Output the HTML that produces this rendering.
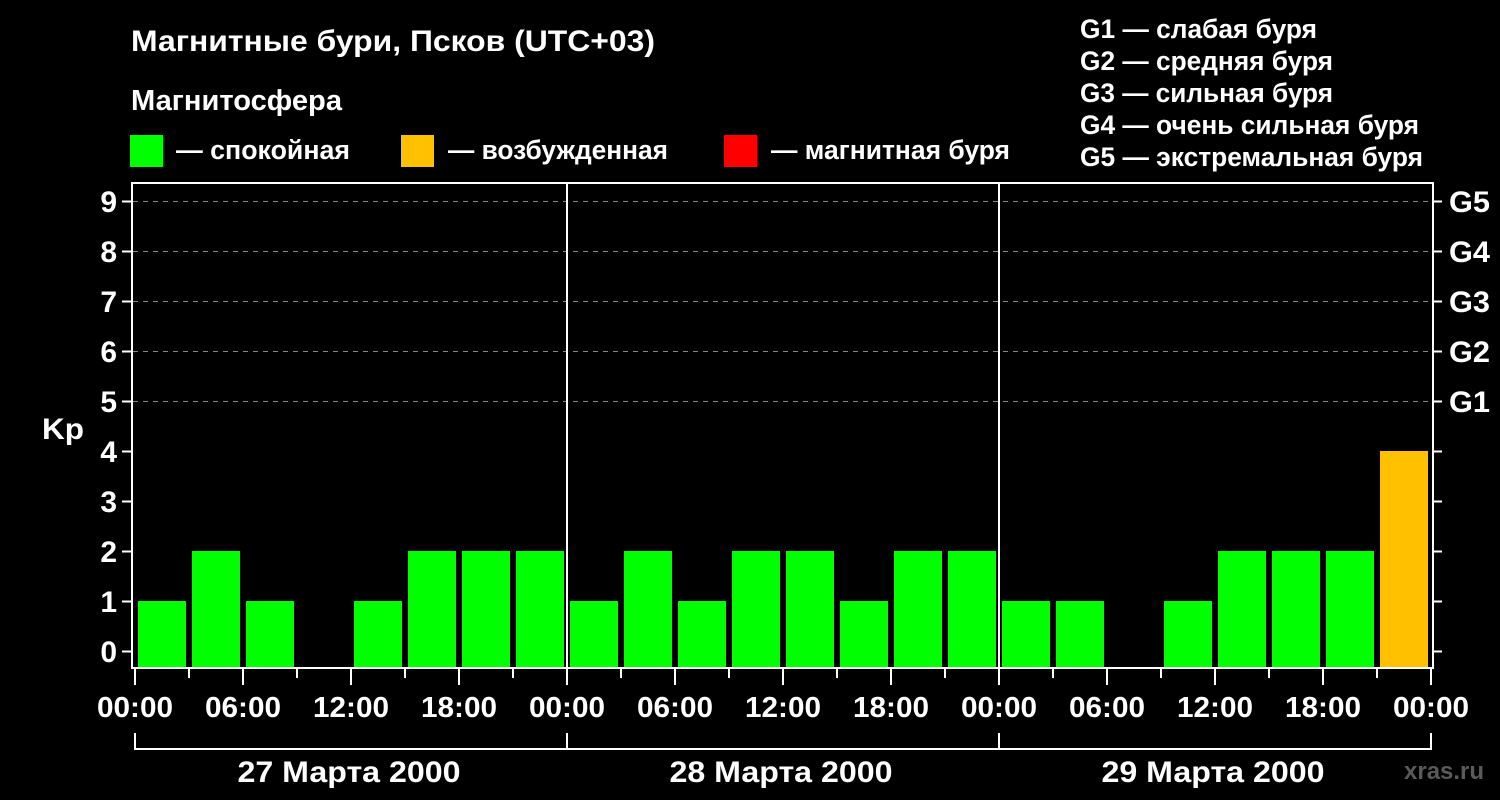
<!DOCTYPE html>
<html><head><meta charset="utf-8"><style>
html,body{margin:0;padding:0;background:#000;}
svg{display:block}
text{font-family:"Liberation Sans",Arial,sans-serif;font-weight:bold;fill:#fff}
</style></head><body>
<svg width="1500" height="800" viewBox="0 0 1500 800" xmlns="http://www.w3.org/2000/svg">
<rect width="1500" height="800" fill="#000"/>
<text x="131" y="51" font-size="30" textLength="524" lengthAdjust="spacingAndGlyphs">Магнитные бури, Псков (UTC+03)</text>
<text x="131" y="110" font-size="29" textLength="211" lengthAdjust="spacingAndGlyphs">Магнитосфера</text>
<rect x="130" y="135" width="33" height="32" fill="#00ff00"/>
<text x="176" y="159" font-size="27" textLength="174" lengthAdjust="spacingAndGlyphs">— спокойная</text>
<rect x="401" y="135" width="33" height="32" fill="#ffc000"/>
<text x="448" y="159" font-size="27" textLength="220" lengthAdjust="spacingAndGlyphs">— возбужденная</text>
<rect x="724" y="135" width="33" height="32" fill="#ff0000"/>
<text x="771" y="159" font-size="27" textLength="239" lengthAdjust="spacingAndGlyphs">— магнитная буря</text>
<g font-size="27">
<text x="1080" y="38" textLength="237" lengthAdjust="spacingAndGlyphs">G1 — слабая буря</text>
<text x="1080" y="70" textLength="253" lengthAdjust="spacingAndGlyphs">G2 — средняя буря</text>
<text x="1080" y="102" textLength="253" lengthAdjust="spacingAndGlyphs">G3 — сильная буря</text>
<text x="1080" y="134" textLength="339" lengthAdjust="spacingAndGlyphs">G4 — очень сильная буря</text>
<text x="1080" y="166" textLength="343" lengthAdjust="spacingAndGlyphs">G5 — экстремальная буря</text>
</g>
<g stroke="#888" stroke-width="1" stroke-dasharray="5,5">
<line x1="133" y1="201.5" x2="1432" y2="201.5"/>
<line x1="133" y1="251.5" x2="1432" y2="251.5"/>
<line x1="133" y1="301.5" x2="1432" y2="301.5"/>
<line x1="133" y1="351.5" x2="1432" y2="351.5"/>
<line x1="133" y1="401.5" x2="1432" y2="401.5"/>
</g>
<g fill="#00ff00">
<rect x="138" y="601" width="48" height="66"/>
<rect x="192" y="551" width="48" height="116"/>
<rect x="246" y="601" width="48" height="66"/>
<rect x="354" y="601" width="48" height="66"/>
<rect x="408" y="551" width="48" height="116"/>
<rect x="462" y="551" width="48" height="116"/>
<rect x="516" y="551" width="48" height="116"/>
<rect x="570" y="601" width="48" height="66"/>
<rect x="624" y="551" width="48" height="116"/>
<rect x="678" y="601" width="48" height="66"/>
<rect x="732" y="551" width="48" height="116"/>
<rect x="786" y="551" width="48" height="116"/>
<rect x="840" y="601" width="48" height="66"/>
<rect x="894" y="551" width="48" height="116"/>
<rect x="948" y="551" width="48" height="116"/>
<rect x="1002" y="601" width="48" height="66"/>
<rect x="1056" y="601" width="48" height="66"/>
<rect x="1164" y="601" width="48" height="66"/>
<rect x="1218" y="551" width="48" height="116"/>
<rect x="1272" y="551" width="48" height="116"/>
<rect x="1326" y="551" width="48" height="116"/>
</g>
<rect x="1380" y="451" width="48" height="216" fill="#ffc000"/>
<g stroke="#fff" stroke-width="2" fill="none">
<rect x="132" y="183" width="1301" height="485"/>
<line x1="567" y1="183" x2="567" y2="668"/>
<line x1="999" y1="183" x2="999" y2="668"/>
</g>
<g stroke="#fff" stroke-width="2">
<line x1="122" y1="201.5" x2="132" y2="201.5"/><line x1="1433" y1="201.5" x2="1442" y2="201.5"/>
<line x1="122" y1="251.5" x2="132" y2="251.5"/><line x1="1433" y1="251.5" x2="1442" y2="251.5"/>
<line x1="122" y1="301.5" x2="132" y2="301.5"/><line x1="1433" y1="301.5" x2="1442" y2="301.5"/>
<line x1="122" y1="351.5" x2="132" y2="351.5"/><line x1="1433" y1="351.5" x2="1442" y2="351.5"/>
<line x1="122" y1="401.5" x2="132" y2="401.5"/><line x1="1433" y1="401.5" x2="1442" y2="401.5"/>
<line x1="122" y1="451.5" x2="132" y2="451.5"/><line x1="1433" y1="451.5" x2="1442" y2="451.5"/>
<line x1="122" y1="501.5" x2="132" y2="501.5"/><line x1="1433" y1="501.5" x2="1442" y2="501.5"/>
<line x1="122" y1="551.5" x2="132" y2="551.5"/><line x1="1433" y1="551.5" x2="1442" y2="551.5"/>
<line x1="122" y1="601.5" x2="132" y2="601.5"/><line x1="1433" y1="601.5" x2="1442" y2="601.5"/>
<line x1="122" y1="651.5" x2="132" y2="651.5"/><line x1="1433" y1="651.5" x2="1442" y2="651.5"/>
<line x1="135" y1="669" x2="135" y2="685"/><line x1="351" y1="669" x2="351" y2="685"/>
<line x1="567" y1="669" x2="567" y2="685"/><line x1="783" y1="669" x2="783" y2="685"/>
<line x1="999" y1="669" x2="999" y2="685"/><line x1="1215" y1="669" x2="1215" y2="685"/>
<line x1="1431" y1="669" x2="1431" y2="685"/>
<line x1="243" y1="669" x2="243" y2="685"/><line x1="459" y1="669" x2="459" y2="685"/>
<line x1="675" y1="669" x2="675" y2="685"/><line x1="891" y1="669" x2="891" y2="685"/>
<line x1="1107" y1="669" x2="1107" y2="685"/><line x1="1323" y1="669" x2="1323" y2="685"/>
<line x1="189" y1="669" x2="189" y2="678"/><line x1="297" y1="669" x2="297" y2="678"/>
<line x1="405" y1="669" x2="405" y2="678"/><line x1="513" y1="669" x2="513" y2="678"/>
<line x1="621" y1="669" x2="621" y2="678"/><line x1="729" y1="669" x2="729" y2="678"/>
<line x1="837" y1="669" x2="837" y2="678"/><line x1="945" y1="669" x2="945" y2="678"/>
<line x1="1053" y1="669" x2="1053" y2="678"/><line x1="1161" y1="669" x2="1161" y2="678"/>
<line x1="1269" y1="669" x2="1269" y2="678"/><line x1="1377" y1="669" x2="1377" y2="678"/>
</g>
<g stroke="#fff" stroke-width="2" fill="none">
<polyline points="135,733 135,749 1431,749 1431,733"/>
<line x1="567" y1="733" x2="567" y2="749"/>
<line x1="999" y1="733" x2="999" y2="749"/>
</g>
<g font-size="30" text-anchor="end">
<text x="117" y="212">9</text><text x="117" y="262">8</text><text x="117" y="312">7</text>
<text x="117" y="362">6</text><text x="117" y="412">5</text><text x="117" y="462">4</text>
<text x="117" y="512">3</text><text x="117" y="562">2</text><text x="117" y="612">1</text>
<text x="117" y="662">0</text>
</g>
<text x="42" y="439" font-size="30" textLength="42" lengthAdjust="spacingAndGlyphs">Kp</text>
<g font-size="30">
<text x="1449" y="212" textLength="41" lengthAdjust="spacingAndGlyphs">G5</text>
<text x="1449" y="262" textLength="41" lengthAdjust="spacingAndGlyphs">G4</text>
<text x="1449" y="312" textLength="41" lengthAdjust="spacingAndGlyphs">G3</text>
<text x="1449" y="362" textLength="41" lengthAdjust="spacingAndGlyphs">G2</text>
<text x="1449" y="412" textLength="41" lengthAdjust="spacingAndGlyphs">G1</text>
</g>
<g font-size="29" text-anchor="middle">
<text x="135" y="717" textLength="76" lengthAdjust="spacingAndGlyphs">00:00</text>
<text x="243" y="717" textLength="76" lengthAdjust="spacingAndGlyphs">06:00</text>
<text x="351" y="717" textLength="76" lengthAdjust="spacingAndGlyphs">12:00</text>
<text x="459" y="717" textLength="76" lengthAdjust="spacingAndGlyphs">18:00</text>
<text x="567" y="717" textLength="76" lengthAdjust="spacingAndGlyphs">00:00</text>
<text x="675" y="717" textLength="76" lengthAdjust="spacingAndGlyphs">06:00</text>
<text x="783" y="717" textLength="76" lengthAdjust="spacingAndGlyphs">12:00</text>
<text x="891" y="717" textLength="76" lengthAdjust="spacingAndGlyphs">18:00</text>
<text x="999" y="717" textLength="76" lengthAdjust="spacingAndGlyphs">00:00</text>
<text x="1107" y="717" textLength="76" lengthAdjust="spacingAndGlyphs">06:00</text>
<text x="1215" y="717" textLength="76" lengthAdjust="spacingAndGlyphs">12:00</text>
<text x="1323" y="717" textLength="76" lengthAdjust="spacingAndGlyphs">18:00</text>
<text x="1431" y="717" textLength="76" lengthAdjust="spacingAndGlyphs">00:00</text>
</g>
<g font-size="30" text-anchor="middle">
<text x="349" y="782" textLength="223" lengthAdjust="spacingAndGlyphs">27 Марта 2000</text>
<text x="781" y="782" textLength="223" lengthAdjust="spacingAndGlyphs">28 Марта 2000</text>
<text x="1213" y="782" textLength="223" lengthAdjust="spacingAndGlyphs">29 Марта 2000</text>
</g>
<text x="1404" y="779" font-size="24" style="fill:#5a5a5a">xras.ru</text>
</svg>
</body></html>
